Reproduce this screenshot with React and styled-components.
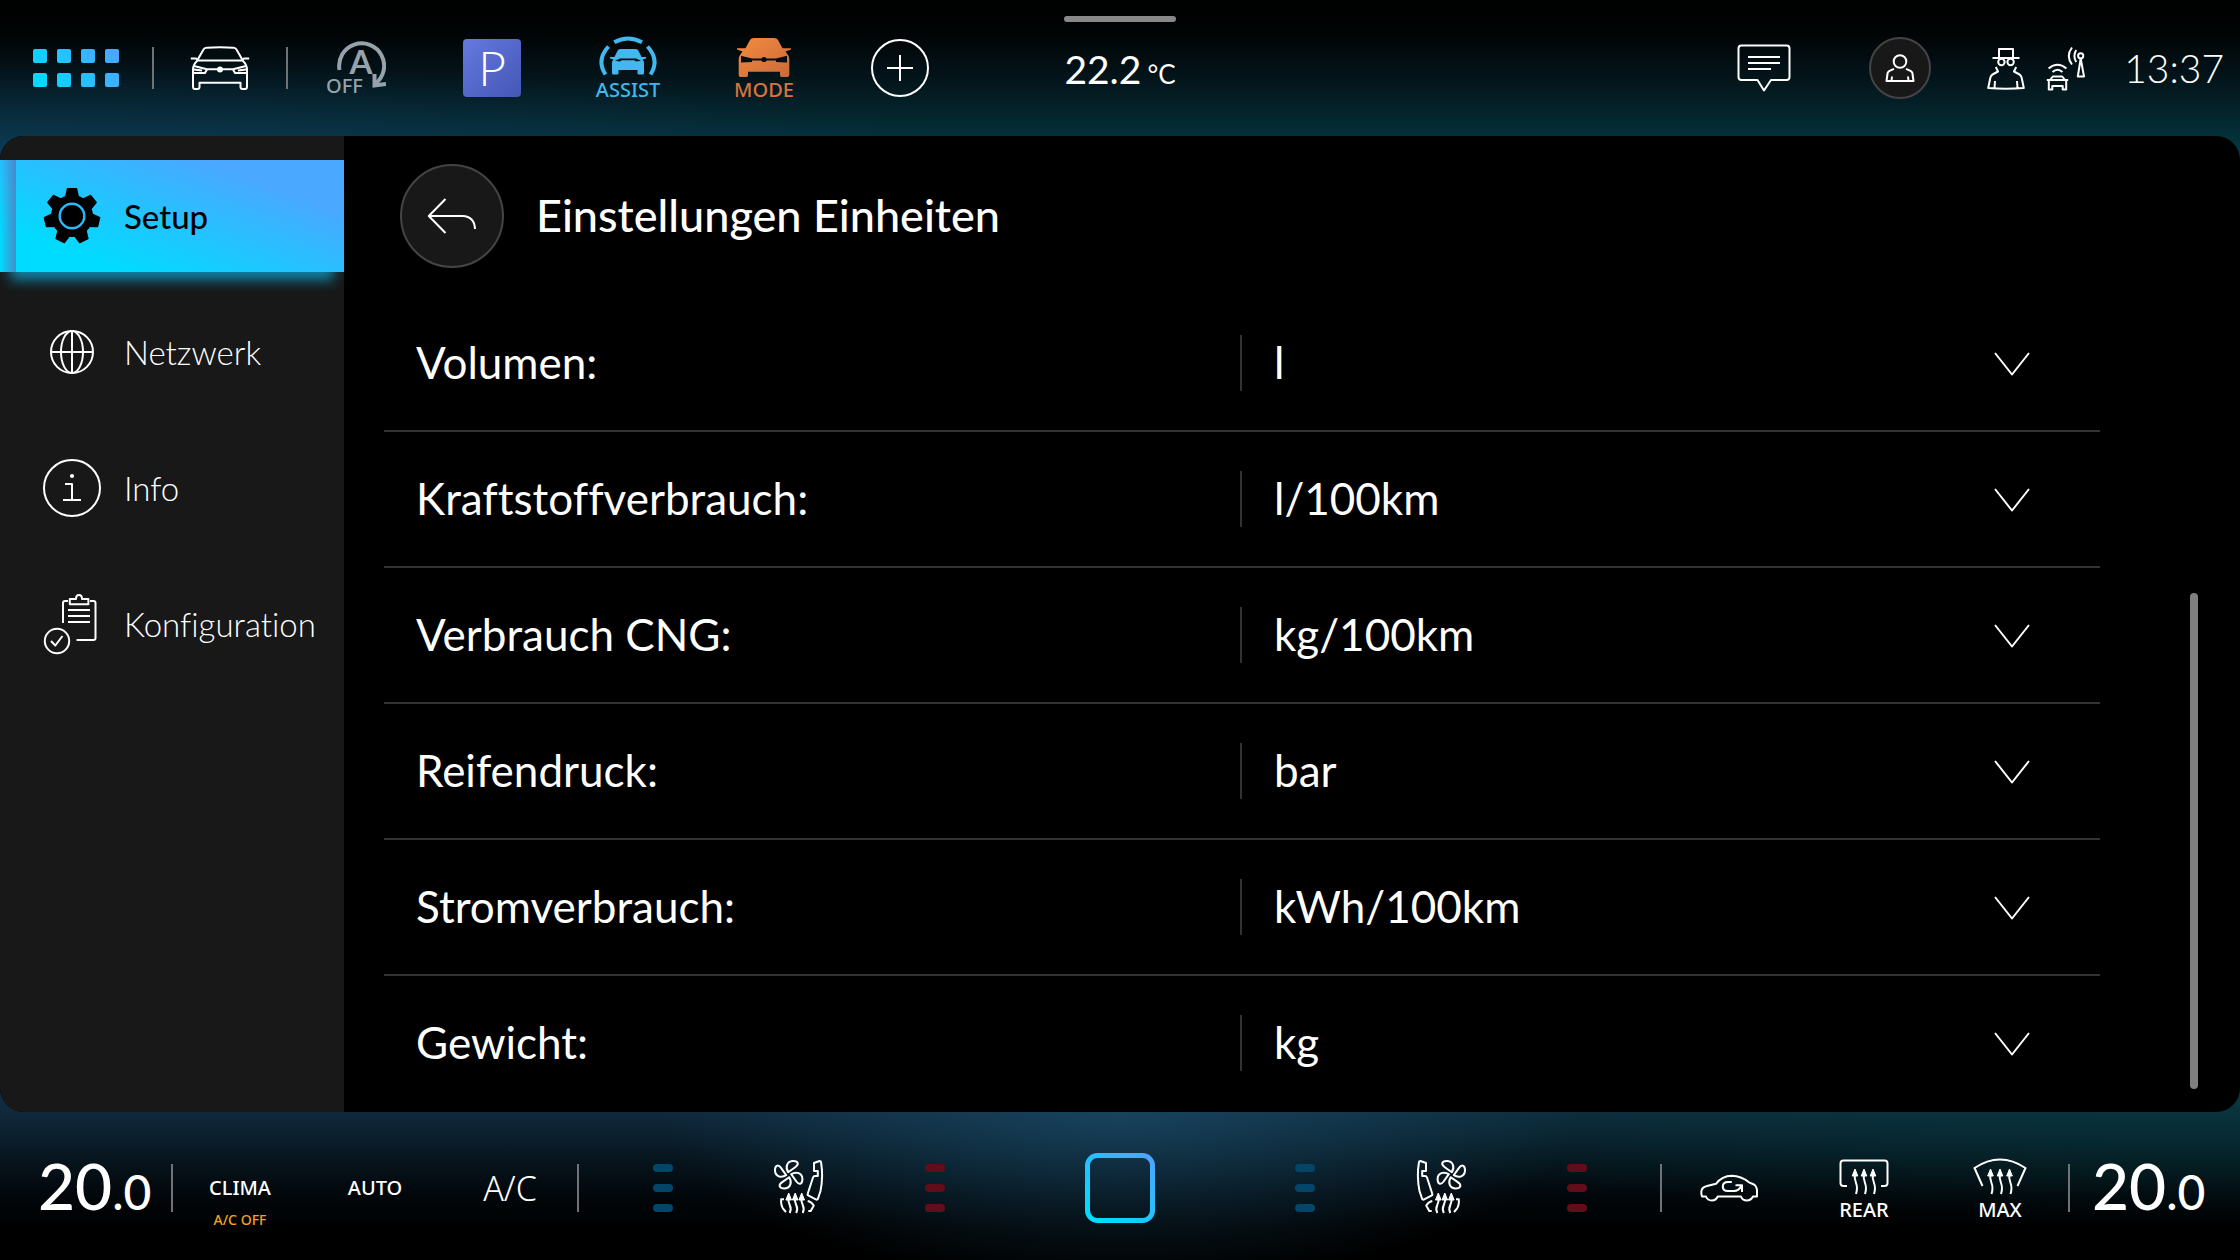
import React from "react";
import styled, { createGlobalStyle, css } from "styled-components";

const GlobalStyle = createGlobalStyle`
  *, *::before, *::after { box-sizing: border-box; }
  body {
    margin: 0;
    background: #000;
    color: #fff;
    font-family: Lato, "Noto Sans", sans-serif;
    font-variant-ligatures: none;
  }
  button, select { font: inherit; color: inherit; }
`;

const Page = styled.div`
  min-height: 100vh;
  display: grid;
  grid-template-rows: 136px 1fr 148px;
  background:
    radial-gradient(ellipse 1000px 100px at 0 100%, rgba(22, 62, 104, 0.5), rgba(22, 62, 104, 0)) 0 0 / 100% 160px no-repeat,
    radial-gradient(ellipse 460px 170px at 50% 24px, rgba(28, 84, 116, 0.6), rgba(28, 84, 116, 0)) 0 100% / 100% 172px no-repeat,
    radial-gradient(ellipse 1100px 130px at 100% 0, rgba(0, 62, 62, 0.6), rgba(0, 62, 62, 0)) 0 100% / 100% 172px no-repeat,
    linear-gradient(180deg, #0f3049, #11293c 14%, #0b1f2d 28%, #06131b 44%, #02070b 62%, #000 82%) 0 100% / 100% 172px no-repeat,
    linear-gradient(180deg, #000, #010506 22%, #03141a 48%, #03242b 70%, #033039 86%, #053d4a) 0 0 / 100% 160px no-repeat,
    #000;
`;

const TopBar = styled.header`
  display: grid;
  grid-template-columns: 1fr auto 1fr;
`;

const Group = styled.div`
  display: flex;
  align-items: center;
  justify-content: ${(p) => (p.$end ? "flex-end" : "flex-start")};
  padding-right: ${(p) => p.$inset || 0}px;
`;

const Slot = styled.button`
  flex: none;
  width: ${(p) => p.$w || 136}px;
  height: 100%;
  padding: 0;
  border: 0;
  background: none;
  display: flex;
  flex-direction: column;
  align-items: center;
  justify-content: center;
  color: ${(p) => p.$color || "#fff"};
  svg { display: block; }
`;

const Divider = styled.span`
  flex: none;
  width: 2px;
  height: ${(p) => p.$h}px;
  background: #6f7375;
`;

const SmallLabel = styled.span`
  font-family: "Noto Sans", sans-serif;
  font-size: 20px;
  line-height: 20px;
  font-weight: 500;
`;

const ParkTile = styled.span`
  width: 58px;
  height: 58px;
  border-radius: 4px;
  background: linear-gradient(135deg, #6579df, #4457b6);
  font-size: 48px;
  line-height: 58px;
  font-weight: 300;
  text-align: center;
`;

const Center = styled.div`
  width: 112px;
  padding-top: 16px;
  display: flex;
  flex-direction: column;
  align-items: center;
  gap: 23px;
`;

const Handle = styled.span`
  width: 100%;
  height: 6px;
  border-radius: 3px;
  background: #888;
`;

const Outside = styled.div`
  display: flex;
  align-items: baseline;
  gap: 6px;
  font-size: 39px;
  line-height: 48px;
  white-space: nowrap;
`;

const Unit = styled.span`
  font-size: 26px;
`;

const Avatar = styled.span`
  width: 62px;
  height: 62px;
  border: 2px solid #444;
  border-radius: 50%;
  background: #181818;
  display: grid;
  place-items: center;
`;

const Clock = styled.time`
  width: 136px;
  text-align: right;
  font-size: 39px;
  line-height: 48px;
  font-weight: 300;
`;

const Panel = styled.div`
  display: grid;
  grid-template-columns: 344px 1fr;
  background: #000;
  border-radius: 24px;
  overflow: hidden;
`;

const Sidebar = styled.nav`
  background: #181818;
  padding-top: 24px;
  display: flex;
  flex-direction: column;
  gap: 24px;
`;

const NavItem = styled.button`
  height: 112px;
  border: 0;
  padding: 0 0 0 43px;
  display: flex;
  align-items: center;
  gap: 23px;
  background: none;
  font-size: 33px;
  line-height: 40px;
  font-weight: 300;
  text-align: left;
  svg { display: block; flex: none; }
  ${(p) => p.$active && css`
    color: #000;
    font-weight: 500;
    background:
      linear-gradient(90deg, rgba(84, 120, 190, 0), rgba(84, 120, 190, 0.8)) 0 0 / 16px 100% no-repeat,
      linear-gradient(20deg, #00dcff 18%, #4aa8ff 78%);
    box-shadow: 0 18px 12px -10px rgba(14, 160, 205, 0.8);
  `}
`;

const Content = styled.main`
  min-width: 0;
  display: grid;
  grid-template-columns: minmax(0, 1fr) 8px;
  column-gap: 90px;
  grid-template-rows: 160px 1fr;
  padding: 0 42px 0 40px;
`;

const TitleBar = styled.div`
  grid-column: 1 / -1;
  padding-left: 16px;
  display: flex;
  align-items: center;
  gap: 32px;
`;

const Back = styled.button`
  width: 104px;
  height: 104px;
  padding: 0;
  border: 2px solid #444;
  border-radius: 50%;
  background: #181818;
  display: grid;
  place-items: center;
`;

const Title = styled.h1`
  margin: 0;
  padding-bottom: 2px;
  font-size: 45px;
  line-height: 56px;
  font-weight: 500;
`;

const List = styled.div`
  display: flex;
  flex-direction: column;
`;

const Row = styled.div`
  height: 136px;
  display: grid;
  grid-template-columns: 214fr 215fr;
  align-items: center;
  border-bottom: 2px solid #333;
  font-size: 44px;
  line-height: 54px;
  &:last-child { border-bottom-color: transparent; }
`;

const RowLabel = styled.label`
  padding: 0 0 2px 32px;
`;

const Field = styled.div`
  display: grid;
  grid-template-columns: 1fr 36px 70px;
  align-items: center;
  border-left: 2px solid #333;
  svg { grid-area: 1 / 2; margin-top: 2px; pointer-events: none; }
`;

const Select = styled.select`
  grid-area: 1 / 1 / 2 / 4;
  appearance: none;
  width: 100%;
  height: 56px;
  margin: 0;
  padding: 0 0 2px 32px;
  border: 0;
  background: transparent;
`;

const Scroll = styled.div`
  align-self: end;
  height: 496px;
  margin-bottom: 23px;
  border-radius: 4px;
  background: #808080;
`;

const ClimateBar = styled.footer`
  display: grid;
  grid-template-columns: 1fr auto 1fr;
  padding-top: 4px;
`;

const Temp = styled.button`
  flex: none;
  width: ${(p) => p.$w}px;
  padding: 2px 0 0 ${(p) => p.$pad}px;
  border: 0;
  background: none;
  text-align: left;
  font-size: 64px;
  line-height: 72px;
  font-weight: 500;
`;

const Decimal = styled.span`
  font-size: 48px;
`;

const ClimaStack = styled.span`
  display: grid;
  grid-template-rows: 20px 20px 20px;
  row-gap: 12px;
  justify-items: center;
`;

const ClimaName = styled(SmallLabel)`
  grid-row: 2;
`;

const Warning = styled(SmallLabel)`
  grid-row: 3;
  color: #f5a31d;
  font-size: 14px;
`;

const AcLabel = styled.span`
  font-family: "Noto Sans", sans-serif;
  font-size: 34px;
  line-height: 40px;
  font-weight: 300;
`;

const LevelStack = styled.span`
  display: grid;
  gap: 12px;
`;

const Level = styled.span`
  width: 20px;
  height: 8px;
  border-radius: 4px;
  background: ${(p) => (p.$warm ? "#620d1a" : "#04456a")};
`;

const Icon = ({ w, h, sw = 2, children }) => (
  <svg width={w} height={h} viewBox={`0 0 ${w} ${h}`} fill="none" stroke="currentColor" strokeWidth={sw} strokeLinejoin="round" aria-hidden="true">
    {children}
  </svg>
);

const AppsIcon = () => (
  <Icon w={86} h={38}>
    <defs>
      <linearGradient id="apps" gradientUnits="userSpaceOnUse" x1="10" y1="44" x2="76" y2="-6">
        <stop offset="0" stopColor="#00dcff" />
        <stop offset="1" stopColor="#4ba6ff" />
      </linearGradient>
    </defs>
    {[0, 24, 48, 72].map((x) => [0, 24].map((y) => (
      <rect key={`${x}-${y}`} x={x} y={y} width="14" height="14" rx="2" fill="url(#apps)" stroke="none" />
    )))}
  </Icon>
);

const CarIcon = () => (
  <Icon w={60} h={44}>
    <path d="M7.5 14 13.5 3.5Q14.3 2 16.5 1.8Q30 .6 43.5 1.8Q45.7 2 46.5 3.5L52.5 14M7 14.5H53M.8 12.4H6L8 14.5M59.2 12.4H54L52 14.5" />
    <path d="M7.5 14.5Q3 18.5 3 23.5V40.5Q3 43 5 43H7.5Q9.5 43 9.5 41V36.8H50.5V41Q50.5 43 52.5 43H55Q57 43 57 40.5V23.5Q57 18.5 52.5 14.5" />
    <path d="M4 20 17 23.3H43L56 20M4 27H15L17 23.5M56 27H45L43 23.5M4 23.5 12 24.5M56 23.5 48 24.5" />
    <circle cx="30" cy="23.5" r="3" fill="currentColor" stroke="none" />
  </Icon>
);

const StartStopIcon = () => (
  <Icon w={60} h={64} sw={4}>
    <path d="M13.5 34A22.5 22.5 0 1 1 49 48" />
    <path d="M48.5 38V49.5L60 48" strokeLinejoin="miter" />
    <g fill="currentColor" stroke="none">
      <text x="35" y="37.5" fontSize="33" fontWeight="700" textAnchor="middle">A</text>
      <text x="0" y="57" fontSize="20" fontWeight="500" fontFamily="Noto Sans, sans-serif">OFF</text>
    </g>
  </Icon>
);

const AssistIcon = () => (
  <Icon w={60} h={44} sw={4}>
    <path d="M16.3 6.3Q30 -1.5 44 6.3M10.5 10.5Q-2 24 7.5 38.5M49.5 10.5Q62 24 52.5 38.5" />
    <g stroke="none">
      <path fill="currentColor" d="M20 14Q21 13 23 13H37Q39 13 40 14L43.6 21H48V22.6L44.5 23.6Q46 25 46 27V37Q46 38.5 44.5 38.5H41Q39.5 38.5 39.5 37V34H20.5V37Q20.5 38.5 19 38.5H15.5Q14 38.5 14 37V27Q14 25 15.5 23.6L12 22.6V21H16.4Z" />
      <path fill="#020e13" d="M17 24.8 22 22.4H38L43 24.8 38 25.4 36.5 24.2H23.5L22 25.4Z" />
    </g>
  </Icon>
);

const ModeIcon = () => (
  <Icon w={60} h={44}>
    <defs>
      <linearGradient id="mode" x1="0" y1="0" x2="1" y2="1">
        <stop offset="0" stopColor="#f68c3f" />
        <stop offset="1" stopColor="#c9683a" />
      </linearGradient>
    </defs>
    <g stroke="none">
      <path fill="url(#mode)" d="M20 2H40Q43 2 44 4L48.5 12.3H57V13.6L51.5 15.4 54 19Q55.3 21 55.3 23V39Q55.3 41 53.5 41H47.5Q46 41 46 39V35.7H14V39Q14 41 12.5 41H6.5Q4.7 41 4.7 39V23Q4.7 21 6 19L8.5 15.4 3 13.6V12.3H11.5L16 4Q17 2 20 2Z" />
      <path fill="#020e13" d="M7 19.8 18 22.6H42L53 19.8V26.6L42 26V24.4H18V26L7 26.6Z" />
      <circle cx="30" cy="23.5" r="2.6" fill="#020e13" />
    </g>
  </Icon>
);

const PlusIcon = () => (
  <Icon w={58} h={58}>
    <circle cx="29" cy="29" r="28" />
    <path d="M16 29H42M29 16V42" />
  </Icon>
);

const MessageIcon = () => (
  <Icon w={54} h={48}>
    <path d="M4.5 1.5H49.5Q52.5 1.5 52.5 4.5V33Q52.5 36 49.5 36H34L27 46.5 20.5 36H4.5Q1.5 36 1.5 33V4.5Q1.5 1.5 4.5 1.5Z" />
    <path d="M11 13H43M11 19H43M11 25H34" />
  </Icon>
);

const PersonIcon = () => (
  <Icon w={30} h={30}>
    <circle cx="15" cy="8.5" r="6.3" />
    <path d="M9 15.8 4.5 17.8Q3 18.5 2.6 20L1.5 28H28.5L27.4 20Q27 18.5 25.5 17.8L21 15.8M6.5 28 7 23.5M23.5 28 23 23.5" />
  </Icon>
);

const IncognitoIcon = () => (
  <Icon w={38} h={43}>
    <path d="M12 11V2H26V11M5.5 11H32.5" />
    <circle cx="14.4" cy="15" r="3.2" />
    <circle cx="23.6" cy="15" r="3.2" />
    <path d="M8.8 20 11 24.5 5.5 27.5Q4 28.3 3.4 30.5L1.2 41Q19 42.6 36.8 41L34.6 30.5Q34 28.3 32.5 27.5L27 24.5 29.2 20M8 34 7.5 41M30 34 30.5 41" />
  </Icon>
);

const CarConnectIcon = () => (
  <Icon w={40} h={45}>
    <path d="M2.6 22.5Q11.5 15 20.4 22.5M6.5 26Q11.5 21.5 16.5 26M4 34 6.8 30.5H16.2L19 34M.8 34H22.2M2.8 34V43.5H6.3V40H16.7V43.5H20.2V34" />
    <circle cx="34.7" cy="9.8" r="2.6" />
    <path d="M34.7 12.5 31.8 30.5H38Z M30.2 4Q26.6 10 30.2 16M26 1.5Q19.6 10 26 18.5" />
  </Icon>
);

const GearIcon = () => (
  <svg width="58" height="58" viewBox="-29 -29 58 58" aria-hidden="true">
    {[0, 1, 2, 3, 4, 5, 6].map((k) => (
      <path key={k} d="M-4.5 -28H4.5Q5.2 -28 5.3 -27L7.5 -17H-7.5L-5.3 -27Q-5.2 -28 -4.5 -28Z" transform={`rotate(${(k * 360) / 7})`} />
    ))}
    <circle r="21" />
    <circle r="12.3" fill="none" stroke="#2ab9fb" strokeWidth="2.4" />
  </svg>
);

const GlobeIcon = () => (
  <Icon w={58} h={58}>
    <circle cx="29" cy="29" r="21" />
    <ellipse cx="29" cy="29" rx="11" ry="21" />
    <path d="M8 29H50M29 8V50" />
  </Icon>
);

const InfoIcon = () => (
  <Icon w={58} h={58}>
    <circle cx="29" cy="29" r="28" />
    <circle cx="29" cy="17" r="2.1" fill="currentColor" stroke="none" />
    <path d="M22 25H29V41M20 41H38" />
  </Icon>
);

const ConfigIcon = () => (
  <Icon w={58} h={62}>
    <path d="M20 30V10Q20 8 22 8H25M47 8H50.5Q52.5 8 52.5 10V45Q52.5 47 50.5 47H33.5" />
    <path d="M26.8 6H33Q33 2 36 2T39 6H45.4V11.2H26.8Z M25 17H47M25 23H47M25 29H47" />
    <circle cx="14" cy="48" r="12.2" />
    <path d="M8 48 12.3 52.5 19.5 43" />
  </Icon>
);

const BackIcon = () => (
  <Icon w={50} h={38}>
    <path d="M18.5 2 1.8 19 18.5 36M1.8 19H35.5Q47.5 19.5 48 32" />
  </Icon>
);

const ChevronIcon = () => (
  <Icon w={36} h={24}>
    <path d="M1 1 18 22.5 35 1" />
  </Icon>
);

const ArrowHead = ({ x, y }) => (
  <path d={`M${x - 2.8} ${y + 7}L${x} ${y}L${x + 2.8} ${y + 7}Z`} fill="currentColor" strokeWidth="1" />
);

const HeatArrow = ({ x, y, long }) => (
  <g>
    {long
      ? <path d={`M${x} ${y + 5}Q${x - 1} ${y + 9} ${x + 1} ${y + 14}T${x + 1} ${y + 25}`} />
      : <path d={`M${x} ${y + 4}Q${x - 1} ${y + 8} ${x + 1} ${y + 12}T${x + 1} ${y + 20}`} />}
    <ArrowHead x={x} y={y} />
  </g>
);

const SeatIcon = ({ mirrored }) => (
  <Icon w={52} h={58}>
    <g transform={mirrored ? "translate(52 0) scale(-1 1)" : undefined}>
      {[0, 90, 180, 270].map((a) => (
        <path key={a} transform={`rotate(${a} 15.7 15.7)`} d="M15.2 13.2C12 8 14 2.4 19.5 2C25 1.8 26.5 5 22.5 8Z" />
      ))}
      <path d="M41 4 46.5 2Q47.7 1.8 48 3Q50.5 17 47.5 32L45 39.5Q44.3 41.2 42.8 40.4L35.6 36.7Q34.2 36 34.8 34.5L40 18.5Q40.5 17 42 17H44.8V12H41Z" />
      <path d="M11 40.3H8.2Q7.6 46 10.3 50L13 53M34.7 42Q38 42.6 40.8 46.5L37.7 52H35.3" />
      {[15.7, 22.2, 28.7].map((x) => <HeatArrow key={x} x={x} y={34} />)}
    </g>
  </Icon>
);

const HomeIcon = () => (
  <Icon w={70} h={70}>
    <defs>
      <linearGradient id="home" gradientUnits="userSpaceOnUse" x1="12" y1="64" x2="60" y2="4">
        <stop offset="0" stopColor="#00dcff" />
        <stop offset="1" stopColor="#4ba6ff" />
      </linearGradient>
    </defs>
    <rect x="2.5" y="2.5" width="65" height="65" rx="10" stroke="url(#home)" strokeWidth="5" />
  </Icon>
);

const RecirculateIcon = () => (
  <Icon w={58} h={30}>
    <path d="M6 23.5H2Q.6 19 2 16.3Q3 14 7 13L16 10.8Q22 3 31.8 2.8Q41 3 49 9.3L54 11.5Q56.5 13 57 17V23.5H53Q51 27.5 46.7 27.5T41 23.5H17.7Q16 27.5 11.8 27.5T6 23.5Z" />
    <path d="M31.8 9H28Q22.8 9 22.8 13.5T28 18H34Q39 18 41.5 12.5M35.5 12.3H42V19" />
  </Icon>
);

const RearIcon = () => (
  <Icon w={54} h={44}>
    <path d="M10 30H6.5Q3.5 30 3.5 27V7.5Q3.5 4.5 6.5 4.5H47.5Q50.5 4.5 50.5 7.5V27Q50.5 30 47.5 30H44" />
    {[18, 27, 36].map((x) => <HeatArrow key={x} x={x} y={13} long />)}
  </Icon>
);

const MaxIcon = () => (
  <Icon w={54} h={44}>
    <path d="M9.5 30 1.5 12Q27 -5 52.5 12L44.5 30" />
    {[17.5, 27, 36.5].map((x) => <HeatArrow key={x} x={x} y={13} long />)}
  </Icon>
);

const NAV = [
  ["Setup", GearIcon],
  ["Netzwerk", GlobeIcon],
  ["Info", InfoIcon],
  ["Konfiguration", ConfigIcon],
];

const UNITS = [
  ["volume", "Volumen:", "l"],
  ["fuel", "Kraftstoffverbrauch:", "l/100km"],
  ["cng", "Verbrauch CNG:", "kg/100km"],
  ["pressure", "Reifendruck:", "bar"],
  ["power", "Stromverbrauch:", "kWh/100km"],
  ["weight", "Gewicht:", "kg"],
];

const Levels = ({ warm }) => (
  <LevelStack>
    <Level $warm={warm} />
    <Level $warm={warm} />
    <Level $warm={warm} />
  </LevelStack>
);

export default function App() {
  return (
    <Page>
      <GlobalStyle />
      <TopBar>
        <Group>
          <Slot $w={152} aria-label="Apps"><AppsIcon /></Slot>
          <Divider $h={42} />
          <Slot $w={132} aria-label="Fahrzeug"><CarIcon /></Slot>
          <Divider $h={42} />
          <Slot $color="#97a3ab"><StartStopIcon /></Slot>
          <Slot><ParkTile>P</ParkTile></Slot>
          <Slot $color="#42b8ef"><AssistIcon /><SmallLabel>ASSIST</SmallLabel></Slot>
          <Slot $color="#d8743c"><ModeIcon /><SmallLabel>MODE</SmallLabel></Slot>
          <Slot aria-label="Hinzufügen"><PlusIcon /></Slot>
        </Group>
        <Center>
          <Handle />
          <Outside>22.2<Unit>°C</Unit></Outside>
        </Center>
        <Group $end $inset={16}>
          <Slot aria-label="Nachrichten"><MessageIcon /></Slot>
          <Slot aria-label="Profil"><Avatar><PersonIcon /></Avatar></Slot>
          <Slot $w={76} aria-label="Privatsphäre"><IncognitoIcon /></Slot>
          <Slot $w={44} aria-label="Verbindung"><CarConnectIcon /></Slot>
          <Clock>13:37</Clock>
        </Group>
      </TopBar>

      <Panel>
        <Sidebar>
          {NAV.map(([name, NavIcon], i) => (
            <NavItem key={name} $active={i === 0}>
              <NavIcon />
              {name}
            </NavItem>
          ))}
        </Sidebar>
        <Content>
          <TitleBar>
            <Back aria-label="Zurück"><BackIcon /></Back>
            <Title>Einstellungen Einheiten</Title>
          </TitleBar>
          <List>
            {UNITS.map(([id, label, value]) => (
              <Row key={id}>
                <RowLabel htmlFor={id}>{label}</RowLabel>
                <Field>
                  <Select id={id} defaultValue={value}>
                    <option>{value}</option>
                  </Select>
                  <ChevronIcon />
                </Field>
              </Row>
            ))}
          </List>
          <Scroll />
        </Content>
      </Panel>

      <ClimateBar>
        <Group>
          <Temp $w={171} $pad={38}>20<Decimal>.0</Decimal></Temp>
          <Divider $h={48} />
          <Slot $w={134}>
            <ClimaStack><ClimaName>CLIMA</ClimaName><Warning>A/C OFF</Warning></ClimaStack>
          </Slot>
          <Slot><SmallLabel>AUTO</SmallLabel></Slot>
          <Slot $w={134}><AcLabel>A/C</AcLabel></Slot>
          <Divider $h={48} />
        </Group>
        <Group>
          <Slot aria-label="Sitzlüftung links"><Levels /></Slot>
          <Slot aria-label="Sitz links"><SeatIcon /></Slot>
          <Slot aria-label="Sitzheizung links"><Levels warm /></Slot>
          <Slot $w={234} aria-label="Home"><HomeIcon /></Slot>
          <Slot aria-label="Sitzlüftung rechts"><Levels /></Slot>
          <Slot aria-label="Sitz rechts"><SeatIcon mirrored /></Slot>
          <Slot aria-label="Sitzheizung rechts"><Levels warm /></Slot>
        </Group>
        <Group $end>
          <Divider $h={48} />
          <Slot $w={134} aria-label="Umluft"><RecirculateIcon /></Slot>
          <Slot><RearIcon /><SmallLabel>REAR</SmallLabel></Slot>
          <Slot><MaxIcon /><SmallLabel>MAX</SmallLabel></Slot>
          <Divider $h={48} />
          <Temp $w={170} $pad={22}>20<Decimal>.0</Decimal></Temp>
        </Group>
      </ClimateBar>
    </Page>
  );
}
